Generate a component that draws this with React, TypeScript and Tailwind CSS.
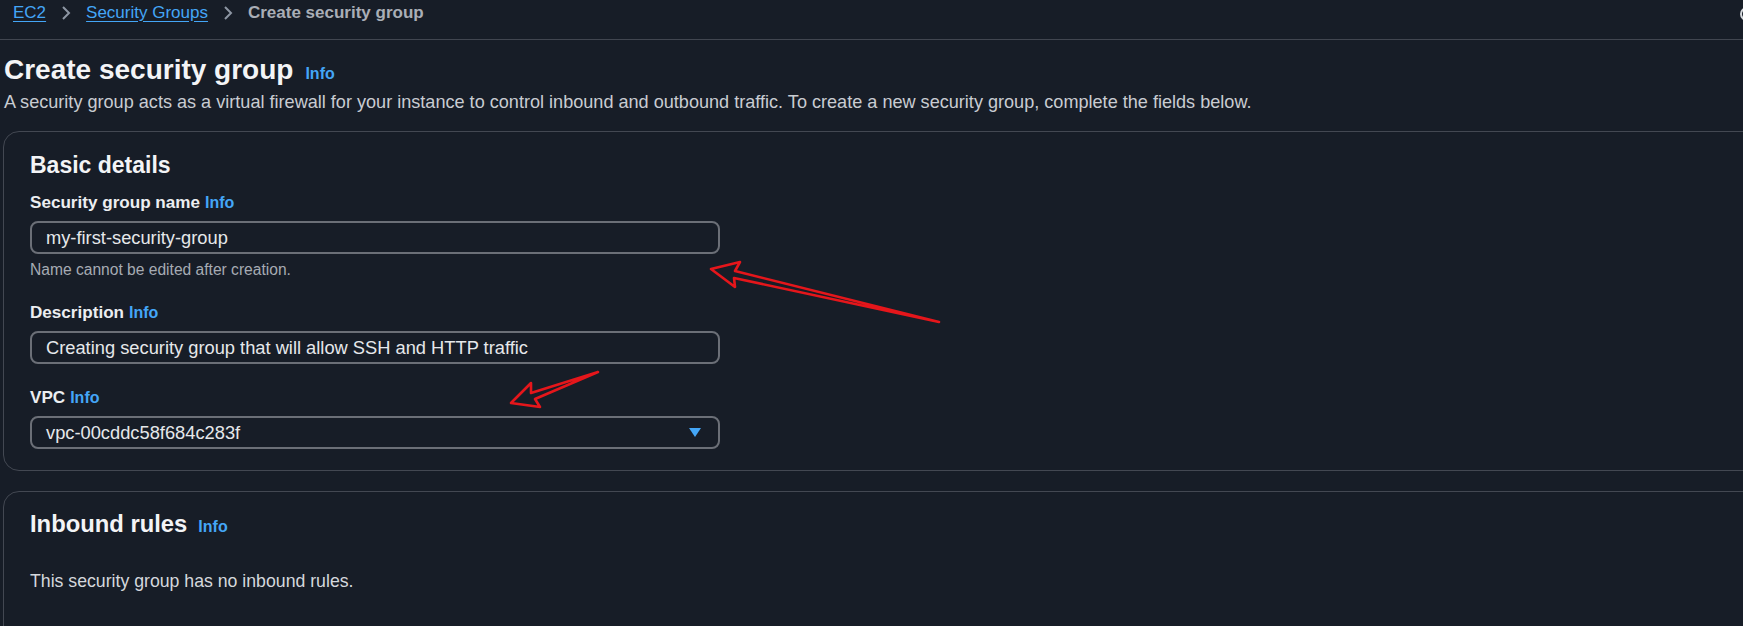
import React from "react";

const font = "font-['Liberation_Sans',Arial,sans-serif]";

function Info() {
  return <span className="text-[16px] font-bold text-[#44a6f7]">Info</span>;
}

function Chevron() {
  return (
    <svg width="10" height="16" viewBox="0 0 10 16" className="mt-[2px]">
      <polyline points="2,2 8,8 2,14" fill="none" stroke="#8d96a3" strokeWidth="2" />
    </svg>
  );
}

function Field({ label, value, select }: { label: string; value: string; select?: boolean }) {
  return (
    <div className="flex flex-col">
      <div className="flex items-baseline gap-[5px] leading-[20px]">
        <span className="text-[17.1px] font-bold text-[#eceef1]">{label}</span>
        <Info />
      </div>
      <div className="mt-[8px] flex h-[33px] w-[690px] items-center justify-between rounded-[8px] border-2 border-[#6b6f77] px-[14px]">
        <span className="text-[18.3px] text-[#e6e8eb]">{value}</span>
        {select && (
          <svg width="12" height="9" viewBox="0 0 12 9" className="mr-[3px]">
            <polygon points="0,0 12,0 6,9" fill="#44a6f7" />
          </svg>
        )}
      </div>
    </div>
  );
}

export default function App() {
  return (
    <div className={`relative h-[626px] w-full overflow-hidden bg-[#171d27] ${font}`}>
      {/* breadcrumb */}
      <div className="flex h-[40px] items-start gap-[15px] border-b border-[#414650] pl-[13px] pt-[3px] text-[17px] leading-[20px]">
        <span className="text-[#44a6f7] underline underline-offset-[3px]">EC2</span>
        <Chevron />
        <span className="text-[#44a6f7] underline underline-offset-[3px]">Security Groups</span>
        <Chevron />
        <span className="font-bold text-[#a9aeb6]">Create security group</span>
        <span className="-mr-[13px] ml-auto mt-[4px] h-[14px] w-[16px] shrink-0 rounded-full border-2 border-[#d5d8dc]" />
      </div>

      {/* header */}
      <div className="pl-[4px]">
        <div className="mt-[13px] flex items-baseline gap-[12px] leading-[34px]">
          <h1 className="text-[28px] font-bold text-[#f3f4f6]">Create security group</h1>
          <Info />
        </div>
        <p className="text-[18.1px] leading-[22px] text-[#c9ccd2]">
          A security group acts as a virtual firewall for your instance to control inbound and outbound traffic. To create a new security group, complete the fields below.
        </p>
      </div>

      {/* basic details */}
      <div className="-mr-8 ml-[3px] mt-[18px] rounded-[16px] border border-[#434852] pb-[21px] pl-[26px] pt-[19px]">
        <h2 className="text-[23px] font-bold leading-[28px] text-[#f3f4f6]">Basic details</h2>
        <div className="mt-[14px]">
          <Field label="Security group name" value="my-first-security-group" />
          <p className="mt-[7px] text-[15.6px] leading-[18px] text-[#a6abb3]">Name cannot be edited after creation.</p>
        </div>
        <div className="mt-[24px]">
          <Field label="Description" value="Creating security group that will allow SSH and HTTP traffic" />
        </div>
        <div className="mt-[24px]">
          <Field label="VPC" value="vpc-00cddc58f684c283f" select />
        </div>
      </div>

      {/* inbound rules */}
      <div className="-mr-8 ml-[3px] mt-[20px] h-[200px] rounded-[16px] border border-[#434852] pl-[26px] pt-[18px]">
        <div className="flex items-baseline gap-[11px] leading-[28px]">
          <h2 className="text-[23.8px] font-bold text-[#f3f4f6]">Inbound rules</h2>
          <Info />
        </div>
        <p className="mt-[29px] text-[17.7px] leading-[22px] text-[#d5d8dd]">This security group has no inbound rules.</p>
      </div>

      {/* annotation arrows */}
      <svg className="pointer-events-none absolute left-0 top-0" width="1743" height="626">
        <polygon
          points="711,269 740,262 735,271 939,322 734,278 735,287"
          fill="none"
          stroke="#e5161b"
          strokeWidth="2.6"
          strokeLinejoin="round"
        />
        <polygon
          points="598,372 531,393 531,383 511,403 540,407 535,399"
          fill="none"
          stroke="#e5161b"
          strokeWidth="2.6"
          strokeLinejoin="round"
        />
      </svg>
    </div>
  );
}
